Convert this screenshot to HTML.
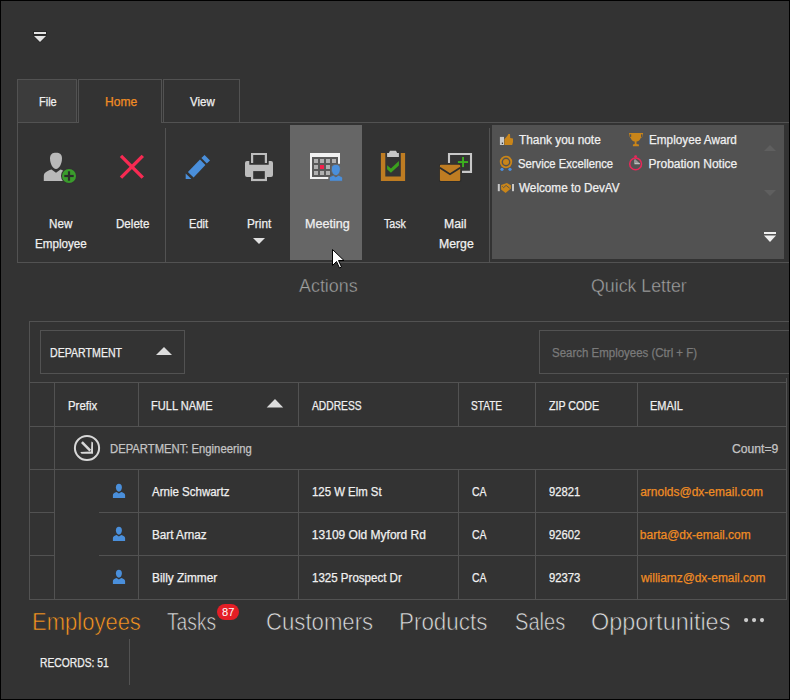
<!DOCTYPE html>
<html><head><meta charset="utf-8"><style>
html,body{margin:0;padding:0;}
body{width:790px;height:700px;overflow:hidden;background:#000;font-family:"Liberation Sans",sans-serif;}
#w{position:absolute;left:0;top:0;width:790px;height:700px;background:#333;overflow:hidden}
#bd{position:absolute;left:0;top:0;width:790px;height:700px;box-sizing:border-box;border:1px solid #000}
.a{position:absolute;box-sizing:border-box}
.t{position:absolute;white-space:nowrap;font-family:"Liberation Sans",sans-serif;transform-origin:0 0;-webkit-text-stroke:0.25px currentColor}
svg{position:absolute;overflow:visible}
</style></head><body><div id="w">
<!-- QAT icon -->
<svg style="left:0;top:0" width="790" height="60">
  <rect x="33" y="31" width="14" height="4" fill="#262626"/>
  <path d="M32.5 35.5 L47.5 35.5 L40 43 Z" fill="#262626"/>
  <rect x="34" y="32" width="12" height="2" fill="#e2e2e2"/>
  <path d="M34 36 L46 36 L40 42 Z" fill="#e2e2e2"/>
</svg>
<!-- Tabs -->
<div class="a" style="left:17px;top:79px;width:60px;height:44px;background:#3c3c3c;border:1px solid #525252"></div>
<!-- ribbon panel -->
<div class="a" style="left:17px;top:122px;width:773px;height:141px;border:1px solid #525252;border-right:none"></div>
<div class="a" style="left:78px;top:79px;width:84px;height:44px;background:#333;border:1px solid #525252;border-bottom:none"></div>
<div class="a" style="left:163px;top:79px;width:77px;height:44px;background:#333;border:1px solid #525252"></div>
<!-- separators -->
<div class="a" style="left:165px;top:128px;width:1px;height:134px;background:#525252"></div>
<div class="a" style="left:489px;top:128px;width:1px;height:134px;background:#525252"></div>
<!-- Meeting highlight -->
<div class="a" style="left:290px;top:125px;width:72px;height:135px;background:#666"></div>
<!-- Gallery -->
<div class="a" style="left:492px;top:125px;width:292px;height:134px;background:#525252"></div>

<!-- Grid -->
<div class="a" style="left:29px;top:321px;width:761px;height:1px;background:#525252"></div>
<div class="a" style="left:29px;top:321px;width:1px;height:279px;background:#525252"></div>
<div class="a" style="left:786px;top:378px;width:1px;height:222px;background:#525252"></div>
<div class="a" style="left:29px;top:599px;width:758px;height:1px;background:#525252"></div>
<!-- group panel box -->
<div class="a" style="left:40px;top:330px;width:145px;height:44px;border:1px solid #525252"></div>
<!-- search box -->
<div class="a" style="left:539px;top:330px;width:251px;height:44px;border:1px solid #525252;border-right:none"></div>
<!-- header lines -->
<div class="a" style="left:29px;top:382px;width:758px;height:1px;background:#525252"></div>
<div class="a" style="left:29px;top:426px;width:758px;height:1px;background:#525252"></div>
<div class="a" style="left:29px;top:469px;width:758px;height:1px;background:#525252"></div>
<div class="a" style="left:54px;top:382px;width:1px;height:218px;background:#525252"></div>
<div class="a" style="left:138px;top:382px;width:1px;height:45px;background:#525252"></div>
<div class="a" style="left:298px;top:382px;width:1px;height:45px;background:#525252"></div>
<div class="a" style="left:458px;top:382px;width:1px;height:45px;background:#525252"></div>
<div class="a" style="left:535px;top:382px;width:1px;height:45px;background:#525252"></div>
<div class="a" style="left:637px;top:382px;width:1px;height:45px;background:#525252"></div>
<div class="a" style="left:138px;top:469px;width:1px;height:131px;background:#525252"></div>
<div class="a" style="left:298px;top:469px;width:1px;height:131px;background:#525252"></div>
<div class="a" style="left:458px;top:469px;width:1px;height:131px;background:#525252"></div>
<div class="a" style="left:535px;top:469px;width:1px;height:131px;background:#525252"></div>
<div class="a" style="left:637px;top:469px;width:1px;height:131px;background:#525252"></div>
<!-- row lines -->
<div class="a" style="left:29px;top:512px;width:25px;height:1px;background:#525252"></div>
<div class="a" style="left:29px;top:555px;width:25px;height:1px;background:#525252"></div>
<div class="a" style="left:99px;top:512px;width:688px;height:1px;background:#525252"></div>
<div class="a" style="left:99px;top:555px;width:688px;height:1px;background:#525252"></div>

<!-- status separator -->
<div class="a" style="left:129px;top:639px;width:1px;height:46px;background:#525252"></div>
<!-- badge -->
<div class="a" style="left:217px;top:604px;width:22px;height:16px;border-radius:8px;background:#e41e26"></div>
<!-- dots -->
<svg style="left:0;top:600px" width="790" height="40">
  <circle cx="746.1" cy="20.1" r="2.1" fill="#cbcbcb"/>
  <circle cx="754.05" cy="20.1" r="2.1" fill="#cbcbcb"/>
  <circle cx="762" cy="20.1" r="2.1" fill="#cbcbcb"/>
</svg>

<div class="t" style="left:38.80px;top:96.00px;font-size:12px;line-height:12px;color:#f0f0f0;transform:scaleX(0.9168)">File</div>
<div class="t" style="left:104.62px;top:96.00px;font-size:12px;line-height:12px;color:#f08c24;transform:scaleX(1.0055)">Home</div>
<div class="t" style="left:189.56px;top:96.00px;font-size:12px;line-height:12px;color:#f0f0f0;transform:scaleX(0.9564)">View</div>
<div class="t" style="left:48.55px;top:218.00px;font-size:12px;line-height:12px;color:#f0f0f0;transform:scaleX(0.9697)">New</div>
<div class="t" style="left:34.53px;top:238.00px;font-size:12px;line-height:12px;color:#f0f0f0;transform:scaleX(0.9703)">Employee</div>
<div class="t" style="left:115.61px;top:218.00px;font-size:12px;line-height:12px;color:#f0f0f0;transform:scaleX(0.9650)">Delete</div>
<div class="t" style="left:188.83px;top:218.00px;font-size:12px;line-height:12px;color:#f0f0f0;transform:scaleX(0.9260)">Edit</div>
<div class="t" style="left:247.11px;top:218.00px;font-size:12px;line-height:12px;color:#f0f0f0;transform:scaleX(0.9813)">Print</div>
<div class="t" style="left:304.65px;top:218.00px;font-size:12px;line-height:12px;color:#f0f0f0;transform:scaleX(1.0470)">Meeting</div>
<div class="t" style="left:383.58px;top:218.00px;font-size:12px;line-height:12px;color:#f0f0f0;transform:scaleX(0.8888)">Task</div>
<div class="t" style="left:444.37px;top:218.00px;font-size:12px;line-height:12px;color:#f0f0f0;transform:scaleX(1.0186)">Mail</div>
<div class="t" style="left:438.83px;top:238.00px;font-size:12px;line-height:12px;color:#f0f0f0;transform:scaleX(1.0196)">Merge</div>
<div class="t" style="left:298.71px;top:277.00px;font-size:18px;line-height:18px;color:#a4a4a4;transform:scaleX(0.9946);-webkit-text-stroke:0.4px #333">Actions</div>
<div class="t" style="left:591.31px;top:277.00px;font-size:18px;line-height:18px;color:#a4a4a4;transform:scaleX(0.9869);-webkit-text-stroke:0.4px #333">Quick Letter</div>
<div class="t" style="left:518.61px;top:134.00px;font-size:12px;line-height:12px;color:#f0f0f0;transform:scaleX(0.9881)">Thank you note</div>
<div class="t" style="left:517.99px;top:158.00px;font-size:12px;line-height:12px;color:#f0f0f0;transform:scaleX(0.9379)">Service Excellence</div>
<div class="t" style="left:518.75px;top:182.00px;font-size:12px;line-height:12px;color:#f0f0f0;transform:scaleX(0.9773)">Welcome to DevAV</div>
<div class="t" style="left:648.64px;top:134.00px;font-size:12px;line-height:12px;color:#f0f0f0;transform:scaleX(0.9779)">Employee Award</div>
<div class="t" style="left:648.52px;top:158.00px;font-size:12px;line-height:12px;color:#f0f0f0">Probation Notice</div>
<div class="t" style="left:50.01px;top:347.00px;font-size:12px;line-height:12px;color:#f0f0f0;transform:scaleX(0.8839)">DEPARTMENT</div>
<div class="t" style="left:551.67px;top:347.00px;font-size:12px;line-height:12px;color:#7a7a7a;transform:scaleX(0.9564)">Search Employees (Ctrl + F)</div>
<div class="t" style="left:67.92px;top:400.00px;font-size:12px;line-height:12px;color:#f0f0f0;transform:scaleX(0.9499)">Prefix</div>
<div class="t" style="left:151.49px;top:400.00px;font-size:12px;line-height:12px;color:#f0f0f0;transform:scaleX(0.9212)">FULL NAME</div>
<div class="t" style="left:311.75px;top:400.00px;font-size:12px;line-height:12px;color:#f0f0f0;transform:scaleX(0.8558)">ADDRESS</div>
<div class="t" style="left:471.33px;top:400.00px;font-size:12px;line-height:12px;color:#f0f0f0;transform:scaleX(0.8418)">STATE</div>
<div class="t" style="left:548.99px;top:400.00px;font-size:12px;line-height:12px;color:#f0f0f0;transform:scaleX(0.8888)">ZIP CODE</div>
<div class="t" style="left:650.41px;top:400.00px;font-size:12px;line-height:12px;color:#f0f0f0;transform:scaleX(0.9142)">EMAIL</div>
<div class="t" style="left:110.29px;top:443.00px;font-size:12px;line-height:12px;color:#c4c4c4;transform:scaleX(0.9387)">DEPARTMENT: Engineering</div>
<div class="t" style="left:731.75px;top:443.00px;font-size:12px;line-height:12px;color:#c4c4c4;transform:scaleX(1.0140)">Count=9</div>
<div class="t" style="left:152.31px;top:486.00px;font-size:12px;line-height:12px;color:#f0f0f0;transform:scaleX(0.9593)">Arnie Schwartz</div>
<div class="t" style="left:151.98px;top:529.00px;font-size:12px;line-height:12px;color:#f0f0f0;transform:scaleX(0.9758)">Bart Arnaz</div>
<div class="t" style="left:151.95px;top:572.00px;font-size:12px;line-height:12px;color:#f0f0f0;transform:scaleX(0.9883)">Billy Zimmer</div>
<div class="t" style="left:311.87px;top:486.00px;font-size:12px;line-height:12px;color:#f0f0f0;transform:scaleX(0.9484)">125 W Elm St</div>
<div class="t" style="left:311.87px;top:529.00px;font-size:12px;line-height:12px;color:#f0f0f0">13109 Old Myford Rd</div>
<div class="t" style="left:311.56px;top:572.00px;font-size:12px;line-height:12px;color:#f0f0f0;transform:scaleX(0.9608)">1325 Prospect Dr</div>
<div class="t" style="left:471.63px;top:486.00px;font-size:12px;line-height:12px;color:#f0f0f0;transform:scaleX(0.8739)">CA</div>
<div class="t" style="left:471.63px;top:529.00px;font-size:12px;line-height:12px;color:#f0f0f0;transform:scaleX(0.8739)">CA</div>
<div class="t" style="left:471.63px;top:572.00px;font-size:12px;line-height:12px;color:#f0f0f0;transform:scaleX(0.8739)">CA</div>
<div class="t" style="left:548.50px;top:486.00px;font-size:12px;line-height:12px;color:#f0f0f0;transform:scaleX(0.9345)">92821</div>
<div class="t" style="left:548.50px;top:529.00px;font-size:12px;line-height:12px;color:#f0f0f0;transform:scaleX(0.9351)">92602</div>
<div class="t" style="left:548.51px;top:572.00px;font-size:12px;line-height:12px;color:#f0f0f0;transform:scaleX(0.9400)">92373</div>
<div class="t" style="left:640.17px;top:486.00px;font-size:12px;line-height:12px;color:#f08c24">arnolds@dx-email.com</div>
<div class="t" style="left:639.83px;top:529.00px;font-size:12px;line-height:12px;color:#f08c24">barta@dx-email.com</div>
<div class="t" style="left:640.68px;top:572.00px;font-size:12px;line-height:12px;color:#f08c24;transform:scaleX(0.9917)">williamz@dx-email.com</div>
<div class="t" style="left:31.59px;top:611.00px;font-size:23px;line-height:23px;color:#ff9820;transform:scaleX(0.9569);-webkit-text-stroke:0.6px #333">Employees</div>
<div class="t" style="left:167.24px;top:611.00px;font-size:23px;line-height:23px;color:#dcdcdc;transform:scaleX(0.8354);-webkit-text-stroke:0.6px #333">Tasks</div>
<div class="t" style="left:266.38px;top:611.00px;font-size:23px;line-height:23px;color:#dcdcdc;transform:scaleX(0.9636);-webkit-text-stroke:0.6px #333">Customers</div>
<div class="t" style="left:399.07px;top:611.00px;font-size:23px;line-height:23px;color:#dcdcdc;transform:scaleX(0.9734);-webkit-text-stroke:0.6px #333">Products</div>
<div class="t" style="left:514.90px;top:611.00px;font-size:23px;line-height:23px;color:#dcdcdc;transform:scaleX(0.8744);-webkit-text-stroke:0.6px #333">Sales</div>
<div class="t" style="left:591.28px;top:611.00px;font-size:23px;line-height:23px;color:#dcdcdc;transform:scaleX(1.0187);-webkit-text-stroke:0.6px #333">Opportunities</div>
<div class="t" style="left:40.06px;top:657.00px;font-size:12px;line-height:12px;color:#f0f0f0;transform:scaleX(0.8588)">RECORDS: 51</div>
<div class="t" style="left:221.86px;top:607.00px;font-size:11px;line-height:11px;color:#ffffff;transform:scaleX(1.0078);-webkit-text-stroke:0">87</div>
<svg style="left:0;top:0" width="790" height="700" viewBox="0 0 790 700">
  <!-- New Employee -->
  <g fill="#b9b9b9">
    <path d="M50,158.5 C50,154 52.5,152.8 56,152.8 C59.8,152.8 62,154.5 62,158.5 C62,163.5 59.2,169 56,169 C52.8,169 50,163.5 50,158.5 Z"/>
    <path d="M43.8,181 L43.8,176.2 C43.8,172.8 46.5,171.2 51.5,169.6 L56,172.8 L60.5,169.6 C62,170 63.5,170.6 64.5,171.3 L64.5,181 Z"/>
  </g>
  <circle cx="69" cy="176" r="8" fill="#333"/>
  <circle cx="69" cy="176" r="7" fill="#3a9c2c"/>
  <rect x="64.3" y="174.9" width="9.4" height="2.2" fill="#2b2b2b"/>
  <rect x="67.9" y="171.3" width="2.2" height="9.4" fill="#2b2b2b"/>

  <!-- Delete -->
  <g stroke="#f72a52" stroke-width="3.4" stroke-linecap="butt">
    <line x1="121" y1="155.9" x2="142.8" y2="177.6"/>
    <line x1="142.8" y1="155.9" x2="121" y2="177.6"/>
  </g>

  <!-- Edit pencil -->
  <g fill="#4a8fdb">
    <path d="M185.7,173.6 L185.7,179.1 L191.4,179.1 Z"/>
    <path d="M187.9,172.1 L200,159.6 L205.4,165 L193.6,177.5 Z"/>
    <path d="M201.4,157.9 L204.6,154.9 L210,160.4 L206.8,163.6 Z"/>
  </g>

  <!-- Print -->
  <g fill="#bdbdbd">
    <path d="M252.1,163.1 L252.1,154 L265.9,154 L265.9,163.1" fill="none" stroke="#bdbdbd" stroke-width="2.2"/>
    <path d="M247,161 L249.3,161 L249.3,164.8 L268.7,164.8 L268.7,161 L271,161 Q273,161 273,163 L273,175 Q273,177 271,177 L247,177 Q245,177 245,175 L245,163 Q245,161 247,161 Z"/>
    <rect x="251" y="170" width="16" height="11.1"/>
    <rect x="253.2" y="171.1" width="11.6" height="7.8" fill="#333"/>
  </g>

  <!-- Meeting -->
  <rect x="312" y="157" width="26" height="20" fill="#5a5a5a"/>
  <path d="M310,153 L340,153 L340,163.7 L338,163.7 L338,157.1 L312,157.1 L312,177.1 L328.3,177.1 L328.3,179.1 L310,179.1 Z" fill="#f2f2f2"/>
  <g fill="#b0b0b0">
    <rect x="314" y="159" width="4" height="4"/><rect x="320" y="159" width="4" height="4"/><rect x="326" y="159" width="4" height="4"/><rect x="332" y="159" width="4" height="4"/>
    <rect x="314" y="165" width="4" height="4"/><rect x="326" y="165" width="4" height="4"/>
    <rect x="314" y="171" width="4" height="4"/><rect x="320" y="171" width="4" height="4"/><rect x="326" y="171" width="4" height="4"/>
  </g>
  <rect x="320" y="165" width="4" height="4" fill="#f5204c"/>
  <g fill="#4a8fdb" stroke="#666" stroke-width="1">
    <path d="M331.3,169 C331.3,165.5 333.2,164.4 335.9,164.4 C338.7,164.4 340.4,165.6 340.4,169 C340.4,172.5 338.3,175.6 335.9,175.6 C333.5,175.6 331.3,172.5 331.3,169 Z"/>
    <path d="M329.3,181.3 L329.3,178.6 C329.3,176.8 331,176 333.5,175.2 L335.9,176.9 L338.3,175.2 C340.8,176 342.7,176.8 342.7,178.6 L342.7,181.3 Z"/>
  </g>

  <!-- Task -->
  <path d="M380.9,152.9 L385.3,152.9 L385.3,176.5 L400.8,176.5 L400.8,152.9 L405.1,152.9 L405.1,180.9 L380.9,180.9 Z" fill="#be7c22"/>
  <path d="M387.1,153.1 L388.9,153.1 L390,150.8 L396,150.8 L397.1,153.1 L398.9,153.1 L398.9,157 L387.1,157 Z" fill="#c8c8c8"/>
  <path d="M387.1,165.2 L390.9,168.6 L398.9,161.1 L398.9,165.4 L390.9,172.7 L387.1,169.2 Z" fill="#3ba11e"/>

  <!-- Mail Merge -->
  <path d="M449,162.9 L449,154 L471,154 L471,171.9 L462,171.9" fill="none" stroke="#c8c8c8" stroke-width="2.1"/>
  <rect x="457.9" y="161.1" width="10.2" height="1.9" fill="#3cb01e"/>
  <rect x="462.1" y="157" width="1.9" height="10.1" fill="#3cb01e"/>
  <rect x="439" y="163.8" width="22.2" height="18.1" rx="1.5" fill="#2c2c2c"/>
  <rect x="439.9" y="164.7" width="20.3" height="16.2" rx="1" fill="#be7c22"/>
  <path d="M439.9,167.7 L450,174.2 L460.2,167.7" fill="none" stroke="#2c2c2c" stroke-width="1.8"/>

  <!-- Print dropdown -->
  <path d="M253,238 L265,238 L259,244 Z" fill="#e0e0e0"/>

  <!-- Gallery icons -->
  <rect x="499.9" y="136.9" width="4.1" height="8.1" fill="#c8c8c8"/>
  <circle cx="502.4" cy="143.3" r="0.7" fill="#222"/>
  <path d="M504.4,139.2 L507.6,135.6 L508.4,134 L510,134 L510.2,138 L513,138.4 L513,142 L512.2,145 L504.4,145 Z" fill="#c98519"/>

  <circle cx="506" cy="162" r="5.3" fill="none" stroke="#c98519" stroke-width="1.8"/>
  <circle cx="506" cy="162" r="3" fill="#c98519"/>
  <circle cx="502" cy="169.3" r="1.6" fill="#4a90e2"/>
  <circle cx="510" cy="169.3" r="1.6" fill="#4a90e2"/>

  <rect x="497.8" y="184" width="2" height="7.2" fill="#c8c8c8"/>
  <rect x="512" y="184" width="2" height="7.2" fill="#c8c8c8"/>
  <path d="M501.1,185.1 L506.9,183 L510.9,185.3 L510.9,188.6 L505.6,192.9 L501.1,189.6 Z" fill="#c98519"/>
  <path d="M502.3,186.3 L503.6,187.6 L506.1,185.4 L509.7,188.3" fill="none" stroke="#525252" stroke-width="0.9"/>
  <path d="M629,133 L643.1,133 L642.6,136.5 L640.6,138.3 C640,140 638.5,141.4 636.5,141.6 L636.5,144.1 L638.9,144.5 L638.9,146.2 L632.9,146.2 L632.9,144.5 L634.7,144.1 L634.7,141.6 C632.8,141.4 631.4,140 630.8,138.3 L629.5,136.5 Z" fill="#c98519"/>
  <rect x="629.8" y="134.3" width="1.4" height="2.6" fill="#525252"/>
  <rect x="641" y="134.3" width="1.4" height="2.6" fill="#525252"/>

  <circle cx="635.6" cy="163.9" r="5.9" fill="none" stroke="#e8285a" stroke-width="1.5"/>
  <circle cx="635.6" cy="156.6" r="1.4" fill="#e8285a"/>
  <path d="M635,159.4 L635,163.6 L639.8,163.6" fill="none" stroke="#c8c8c8" stroke-width="1.1"/>
  <path d="M635.5,159.6 L639.6,163.3 L635.5,163.3 Z" fill="#9a9a9a"/>

  <!-- gallery scroll arrows -->
  <path d="M764,151 L776,151 L770,145 Z" fill="#5f5f5f"/>
  <path d="M764,190 L776,190 L770,196 Z" fill="#5f5f5f"/>
  <rect x="764" y="232" width="12" height="2" fill="#f0f0f0"/>
  <path d="M764,235.5 L776,235.5 L770,242 Z" fill="#f0f0f0"/>

  <!-- group panel sort arrow -->
  <path d="M156,355 L172,355 L164,347 Z" fill="#dcdcdc"/>
  <!-- FULL NAME sort arrow -->
  <path d="M266.7,407.4 L283.2,407.4 L275,399 Z" fill="#dcdcdc"/>

  <!-- group row circle icon -->
  <circle cx="87" cy="448" r="12.1" fill="none" stroke="#d8d8d8" stroke-width="2"/>
  <path d="M81.9,442.2 L90.3,450.6" stroke="#d8d8d8" stroke-width="2.6" fill="none"/>
  <path d="M80.3,452.0 L91.0,451.6 L91.4,441.4 L93.0,442.6 L93.0,453.8 L81.5,453.8 Z" fill="#d8d8d8"/>

  <!-- row person icons -->
  <g fill="#4a8fdb">
    <g id="pp">
      <path d="M115.9,487.6 C115.9,485 117,483.8 118.9,483.8 C120.8,483.8 121.9,485 121.9,487.6 C121.9,489.8 120.5,491.7 118.9,491.7 C117.3,491.7 115.9,489.8 115.9,487.6 Z"/>
      <path d="M112.9,498.1 L112.9,495 C112.9,493.5 114.5,492.8 116.6,492.1 L118.9,493.6 L121.2,492.1 C123.4,492.8 125.1,493.5 125.1,495 L125.1,498.1 Z"/>
    </g>
    <use href="#pp" y="43"/>
    <use href="#pp" y="86"/>
  </g>

  <!-- Cursor -->
  <path d="M332.5,249.5 L332.5,265.5 L336.5,261.5 L339.5,268 L341.5,267 L338.5,260.5 L344,260.5 Z" fill="#fff" stroke="#000" stroke-width="1" stroke-linejoin="miter"/>
</svg>

<div id="bd"></div>
</div></body></html>
